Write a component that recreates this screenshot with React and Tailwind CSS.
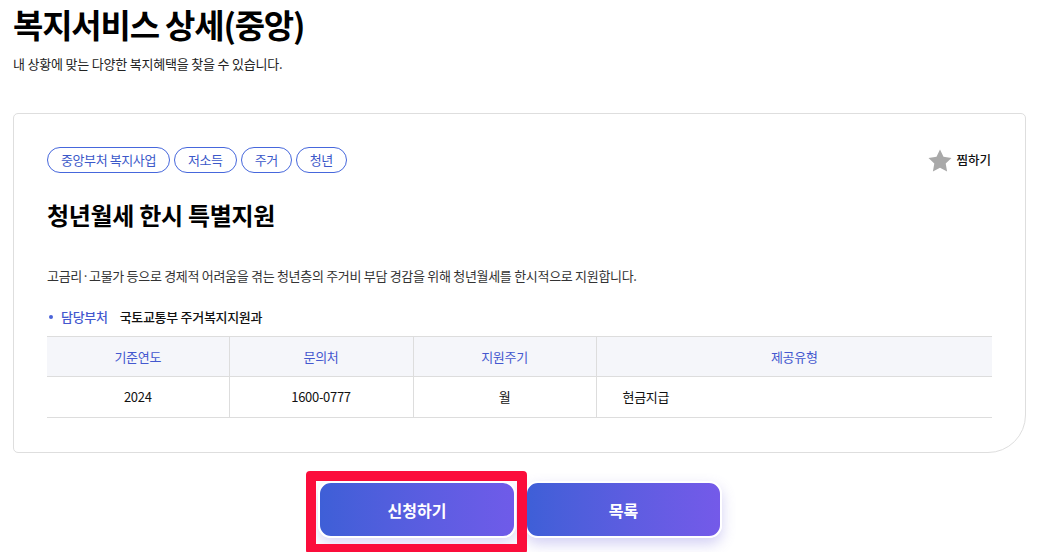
import React from "react";

const font = { fontFamily: '"Noto Sans CJK KR", "Noto Sans", sans-serif' };

function Star() {
  return (
    <svg width="24" height="23" viewBox="0 0 24 23" aria-hidden="true">
      <path d="M12 0.5l3.5 7.3 8 1.1-5.8 5.6 1.4 8L12 18.7l-7.1 3.8 1.4-8L0.5 8.9l8-1.1z" fill="#a9a9a9" />
    </svg>
  );
}

export default function App() {
  const tags = ["중앙부처 복지사업", "저소득", "주거", "청년"];
  return (
    <div className="w-[1040px] h-[552px] overflow-hidden bg-white text-[#111]" style={font}>
      <div className="pl-[13px] pt-[4px]">
        <h1 className="text-[33px] leading-[40px] font-bold tracking-[-1.2px] text-black">복지서비스 상세(중앙)</h1>
        <p className="mt-[11px] text-[13px] leading-[18px] tracking-[-0.2px] text-[#222]">내 상황에 맞는 다양한 복지혜택을 찾을 수 있습니다.</p>
      </div>

      <div className="mt-[40px] ml-[13px] w-[1013px] h-[340px] border border-[#dedede] rounded-tl-[5px] rounded-tr-[5px] rounded-bl-[5px] rounded-br-[38px] px-[33px] pt-[33px]">
        <div className="flex items-center justify-between">
          <div className="flex gap-[4px]">
            {tags.map((t) => (
              <span key={t} className="h-[26px] px-[13px] flex items-center rounded-full border border-[#4667dc] text-[13px] tracking-[-0.4px] text-[#3b58c9]">{t}</span>
            ))}
          </div>
          <div className="flex items-center gap-[4px] pr-[1px]">
            <Star />
            <span className="text-[12.5px] font-medium text-[#111]">찜하기</span>
          </div>
        </div>

        <h2 className="mt-[26px] text-[24px] leading-[32px] font-bold tracking-[-0.3px] text-black">청년월세 한시 특별지원</h2>

        <p className="mt-[36px] text-[13px] leading-[18px] tracking-[-0.3px] text-[#333]">고금리·고물가 등으로 경제적 어려움을 겪는 청년층의 주거비 부담 경감을 위해 청년월세를 한시적으로 지원합니다.</p>

        <div className="mt-[23px] flex items-center text-[13px] leading-[18px] tracking-[-0.3px]">
          <span className="w-[4px] h-[4px] rounded-full bg-[#4a63d8] ml-[2px] mr-[8px]"></span>
          <span className="text-[#4458cf] font-medium">담당부처</span>
          <span className="ml-[12px] text-[#111] font-medium">국토교통부 주거복지지원과</span>
        </div>

        <table className="mt-[10px] w-[945px] border-collapse text-[13px] tracking-[-0.3px]">
          <thead>
            <tr className="bg-[#f5f6fa] h-[40px] border-t border-b border-[#dddddd]">
              <th className="w-[182px] font-normal text-[#4458cf] border-r border-[#dddddd]">기준연도</th>
              <th className="w-[184px] font-normal text-[#4458cf] border-r border-[#dddddd]">문의처</th>
              <th className="w-[183px] font-normal text-[#4458cf] border-r border-[#dddddd]">지원주기</th>
              <th className="font-normal text-[#4458cf]">제공유형</th>
            </tr>
          </thead>
          <tbody>
            <tr className="h-[41px] border-b border-[#dddddd] text-[#111]">
              <td className="text-center border-r border-[#dddddd]">2024</td>
              <td className="text-center border-r border-[#dddddd]">1600-0777</td>
              <td className="text-center border-r border-[#dddddd]">월</td>
              <td className="pl-[26px]">현금지급</td>
            </tr>
          </tbody>
        </table>
      </div>

      <div className="mt-[28px] flex justify-center gap-[9px]">
        <button className="relative w-[198px] h-[57px] rounded-[13px] border-2 border-white bg-gradient-to-r from-[#3e5fd7] to-[#6f5be9] text-white text-[16px] font-bold shadow-[0_6px_14px_rgba(110,100,220,0.25)]">
          신청하기
          <span className="pointer-events-none absolute -left-[14px] -top-[12px] -right-[13px] -bottom-[18px] border-[10px] border-[#fb0d3b] rounded-[4px]"></span>
        </button>
        <button className="w-[197px] h-[57px] rounded-[13px] border-2 border-white bg-gradient-to-r from-[#3e5fd7] to-[#745ae9] text-white text-[16px] font-bold shadow-[0_6px_14px_rgba(110,100,220,0.3)]">
          목록
        </button>
      </div>
    </div>
  );
}
